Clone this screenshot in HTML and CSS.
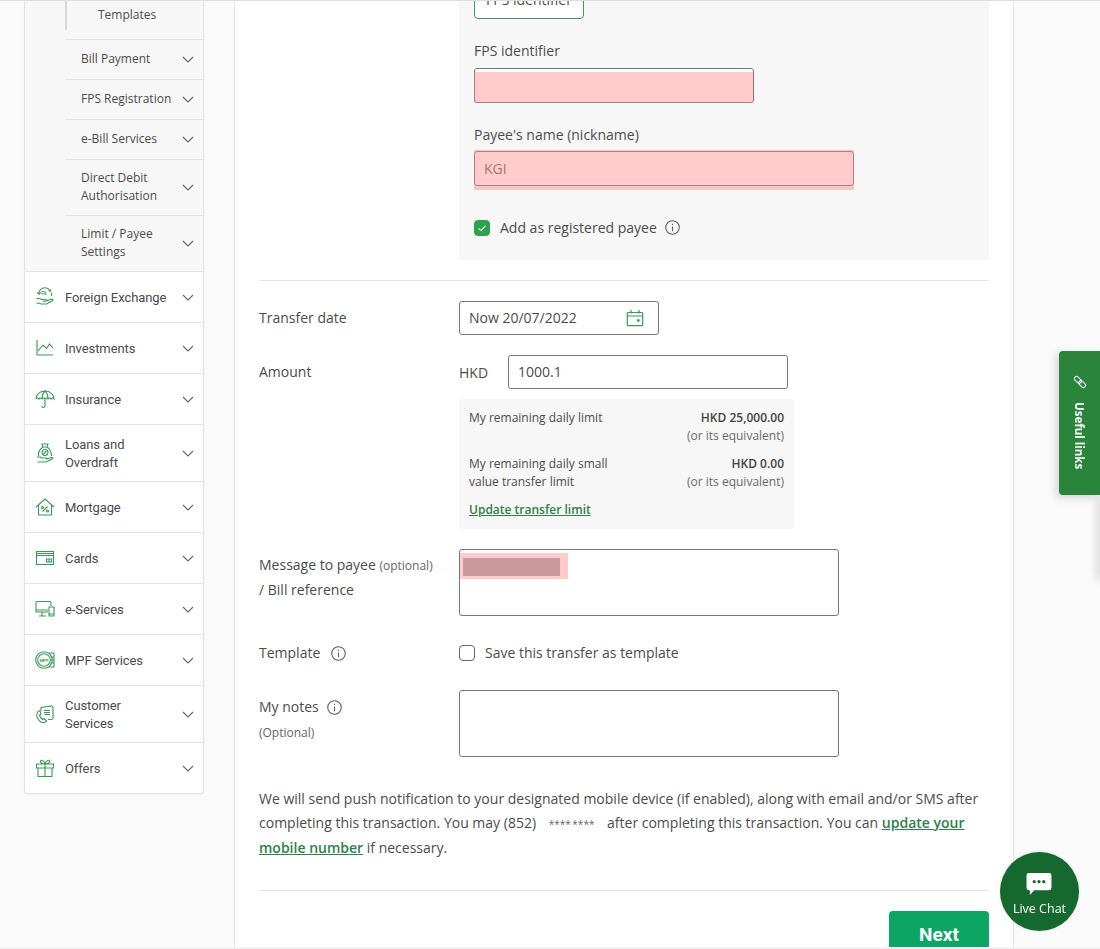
FILE: index.html
```html
<!DOCTYPE html>
<html lang="en">
<head>
<meta charset="utf-8">
<title>Transfer</title>
<link rel="stylesheet" href="styles.css">
</head>
<body>
<div class="page">
  <aside class="sidebar">
    <div class="submenu">
      <div class="sub-row sub-first"><span class="sub-current">Templates</span></div>
      <div class="sub-row"><span>Bill Payment</span><svg class="chev" viewBox="0 0 12 7"><path d="M1 1l5 5 5-5"/></svg></div>
      <div class="sub-row"><span>FPS Registration</span><svg class="chev" viewBox="0 0 12 7"><path d="M1 1l5 5 5-5"/></svg></div>
      <div class="sub-row"><span>e-Bill Services</span><svg class="chev" viewBox="0 0 12 7"><path d="M1 1l5 5 5-5"/></svg></div>
      <div class="sub-row sub-tall"><span>Direct Debit<br>Authorisation</span><svg class="chev" viewBox="0 0 12 7"><path d="M1 1l5 5 5-5"/></svg></div>
      <div class="sub-row sub-tall"><span>Limit / Payee<br>Settings</span><svg class="chev" viewBox="0 0 12 7"><path d="M1 1l5 5 5-5"/></svg></div>
    </div>
    <div class="menu-row">
      <svg class="micon" viewBox="0 0 20 20"><path d="M4 7a6 6 0 0 1 11-3.500M16.500 5.500a6 6 0 0 1-.3 3.500M13.500 3.500l1.700.8.800-1.800M2.300 5.500L4 7.200 5.800 5.700"/><path d="M1.500 11.500h3l2 1h4c1.200 0 1.200 1.800 0 1.800H7.500M11 14l5.500-1.800c1.500-.3 2 1 .9 1.600L11.500 17H6l-1.500-.8h-3"/><text class="fx" x="6.200" y="7.800">FX</text></svg>
      <span>Foreign Exchange</span><svg class="chev" viewBox="0 0 12 7"><path d="M1 1l5 5 5-5"/></svg>
    </div>
    <div class="menu-row">
      <svg class="micon" viewBox="0 0 20 20"><path d="M2 2v15h16M3 13l5-6 3.500 3.500L14.500 6l3.500 4"/></svg>
      <span>Investments</span><svg class="chev" viewBox="0 0 12 7"><path d="M1 1l5 5 5-5"/></svg>
    </div>
    <div class="menu-row">
      <svg class="micon" viewBox="0 0 20 20"><path d="M1 10a9 8 0 0 1 18 0c-1-1.300-2.500-1.300-3 0-.8-1.300-2.500-1.300-3 0-.8-1.300-2.500-1.300-3 0-.8-1.300-2.500-1.300-3 0-.8-1.300-2.500-1.300-3 0-.8-1.300-2.500-1.300-3 0zM10 2V1M7 10c0-4 1.500-6.500 3-8 1.500 1.500 3 4 3 8M10 10v7c0 2-3 2-3 0"/></svg>
      <span>Insurance</span><svg class="chev" viewBox="0 0 12 7"><path d="M1 1l5 5 5-5"/></svg>
    </div>
    <div class="menu-row menu-tall">
      <svg class="micon" viewBox="0 0 20 20"><path d="M7 1h6l-1 3H8zM8 4c-3 2-5 5-4.500 9M12 4c3 2 4.500 5 4.500 9"/><circle cx="10" cy="9.500" r="3"/><path d="M8.500 11l3-3M2 14h3l2 1h4c1 0 1 1.300 0 1.300M11 16l5.500-1.500c1.300-.3 1.800.8.800 1.300L11 19H2.500"/></svg>
      <span>Loans and<br>Overdraft</span><svg class="chev" viewBox="0 0 12 7"><path d="M1 1l5 5 5-5"/></svg>
    </div>
    <div class="menu-row">
      <svg class="micon" viewBox="0 0 20 20"><path d="M1 10l9-8 9 8M3.500 8.500V18h13V8.500M7.500 14.500l5-5"/><circle cx="7.500" cy="10.500" r="1"/><circle cx="12.500" cy="14" r="1"/></svg>
      <span>Mortgage</span><svg class="chev" viewBox="0 0 12 7"><path d="M1 1l5 5 5-5"/></svg>
    </div>
    <div class="menu-row">
      <svg class="micon" viewBox="0 0 20 20"><path d="M1.500 3.500h17v13h-17zM1.500 7.500h17M1.500 5.500h17"/><path d="M11.500 11h5v3h-5zM14 11v3"/></svg>
      <span>Cards</span><svg class="chev" viewBox="0 0 12 7"><path d="M1 1l5 5 5-5"/></svg>
    </div>
    <div class="menu-row">
      <svg class="micon" viewBox="0 0 20 20"><path d="M13 13H1V3.500A1 1 0 0 1 2 2.500h13a1 1 0 0 1 1 1V7M1 11h12M7 13v3.500M4 17h7M14 8h5v9h-5zM14 15h5"/></svg>
      <span>e-Services</span><svg class="chev" viewBox="0 0 12 7"><path d="M1 1l5 5 5-5"/></svg>
    </div>
    <div class="menu-row">
      <svg class="micon" viewBox="0 0 20 20"><circle cx="9" cy="10" r="8.300"/><circle cx="9" cy="10" r="6.300"/><path d="M14 3h5v14h-5M15.500 7h3M15.500 10h3M15.500 13h3"/><text class="mpf" x="9" y="11.600">MPF</text></svg>
      <span>MPF Services</span><svg class="chev" viewBox="0 0 12 7"><path d="M1 1l5 5 5-5"/></svg>
    </div>
    <div class="menu-row menu-tall">
      <svg class="micon" viewBox="0 0 20 20"><path d="M6 6.500V3.500L16 2c1 0 2 1 2 2v10c0 1-1 1.500-2 1.500h-3M9 6.500h6M9 8.500h6M9.500 10.500h5.500"/><path d="M5 6.500c-3 1-4 4-2.500 7.500 1.500 3 4.500 5 7 4.500l2-1.500-2.500-2.500-1.500 1c-1.500-1-2.500-2.500-3-4l1.500-1.500z"/></svg>
      <span>Customer<br>Services</span><svg class="chev" viewBox="0 0 12 7"><path d="M1 1l5 5 5-5"/></svg>
    </div>
    <div class="menu-row menu-last">
      <svg class="micon" viewBox="0 0 20 20"><path d="M1.500 6h17v4h-17zM3 10v8.500h14V10M10 6v12.500M10 6C7 6 5 4.500 5.500 3S9 2 10 6c1-4 4-4.500 4.500-3S13 6 10 6z"/></svg>
      <span>Offers</span><svg class="chev" viewBox="0 0 12 7"><path d="M1 1l5 5 5-5"/></svg>
    </div>
  </aside>

  <main class="content">
    <section class="payee-panel">
      <div class="tag">FPS identifier</div>
      <label class="field-label">FPS identifier</label>
      <div class="redact-wrap">
        <div class="input input-fps"></div>
        <div class="redact redact-fps"></div>
      </div>
      <label class="field-label label-name">Payee's name (nickname)</label>
      <div class="redact-wrap">
        <div class="input input-name">KGI</div>
        <div class="redact redact-name"></div>
      </div>
      <div class="check-row">
        <span class="check check-on"><svg viewBox="0 0 16 16"><path d="M4 8.300l2.800 2.700L12 5.500"/></svg></span>
        <span>Add as registered payee</span>
        <svg class="info info-payee" viewBox="0 0 14 14"><circle cx="7" cy="7" r="6.300"/><path d="M7 6v4.500M7 3.500v1.200"/></svg>
      </div>
    </section>
    <hr class="rule rule-first">
    <div class="row row-date">
      <div class="row-label">Transfer date</div>
      <div class="input input-date"><span>Now 20/07/2022</span>
        <svg class="cal" viewBox="0 0 18 18"><path d="M2 3.500h14a.7.7 0 0 1 .7.7V16a.7.7 0 0 1-.7.7H2a.7.7 0 0 1-.7-.7V4.200a.7.7 0 0 1 .7-.7zM1.300 7h15.400M5 1v3.500M13 1v3.500"/><circle class="cal-dot" cx="12.300" cy="11.500" r="1.400"/></svg>
      </div>
    </div>
    <div class="row row-amount">
      <div class="row-label label-amount">Amount</div>
      <div class="amount-col">
        <div class="amount-line"><span class="ccy">HKD</span><div class="input input-amount">1000.1</div></div>
        <div class="limits">
          <div class="limit-row limit-one"><span>My remaining daily limit</span><span class="limit-val"><b>HKD 25,000.00</b><br><i>(or its equivalent)</i></span></div>
          <div class="limit-row limit-two"><span>My remaining daily small<br>value transfer limit</span><span class="limit-val"><b>HKD 0.00</b><br><i>(or its equivalent)</i></span></div>
          <a class="limit-link" href="#">Update transfer limit</a>
        </div>
      </div>
    </div>
    <div class="row row-message">
      <div class="row-label label-message">Message to payee <small>(optional)</small><br>/ Bill reference</div>
      <div class="redact-wrap">
        <div class="textarea"></div>
        <div class="redact redact-message"><div class="redact-inner"></div></div>
      </div>
    </div>
    <div class="row row-template">
      <div class="row-label label-info">Template <svg class="info info-template" viewBox="0 0 14 14"><circle cx="7" cy="7" r="6.300"/><path d="M7 6v4.500M7 3.500v1.200"/></svg></div>
      <div class="check-row check-plain"><span class="check"></span><span class="check-text">Save this transfer as template</span></div>
    </div>
    <div class="row row-notes">
      <div class="row-label label-notes"><div class="label-info">My notes <svg class="info info-notes" viewBox="0 0 14 14"><circle cx="7" cy="7" r="6.300"/><path d="M7 6v4.500M7 3.500v1.200"/></svg></div><small class="optional">(Optional)</small></div>
      <div class="textarea"></div>
    </div>
    <p class="notice">We will send push notification to your designated mobile device (if enabled), along with email and/or SMS after completing this transaction. You may (852) <span class="masked">****&thinsp;****</span> after completing this transaction. You can <a href="#">update your mobile number</a> if necessary.</p>
    <hr class="rule rule-last">
    <div class="actions"><button class="next" type="button">Next</button></div>
  </main>
</div>

<div class="side-shadow"></div>
<a class="useful" href="#">
  <svg class="useful-icon" viewBox="0 0 16 16"><g transform="rotate(45 8 8)"><rect x="1" y="5.800" width="8" height="4.400" rx="2.200"/><rect x="7" y="5.800" width="8" height="4.400" rx="2.200"/></g></svg>
  <span class="useful-text">Useful links</span>
</a>
<a class="chat" href="#">
  <svg class="chat-icon" viewBox="0 0 26 24"><path class="bubble" d="M2.500 0h21A2.500 2.500 0 0 1 26 2.500v13a2.500 2.500 0 0 1-2.500 2.500H8l-4.500 5v-5h-1A2.500 2.500 0 0 1 0 15.500v-13A2.500 2.500 0 0 1 2.500 0z"/><circle class="dot" cx="8" cy="9" r="1.700"/><circle class="dot" cx="13" cy="9" r="1.700"/><circle class="dot" cx="18" cy="9" r="1.700"/></svg>
  <span>Live Chat</span>
</a>
</body>
</html>
```
FILE: styles.css
```css
* { box-sizing: border-box; }
html, body { margin: 0; height: 949px; overflow: hidden; }
body {
  background: #fafafa;
  border-top: 1px solid #dedede;
  border-bottom: 2px solid #f2f2f2;
  font-family: "Open Sans", "Liberation Sans", sans-serif;
  font-size: 14px;
  color: #4c4c4c;
  position: relative;
}
.page { display: flex; align-items: flex-start; height: 946px; overflow: hidden; padding-left: 24px; }

/* sidebar */
.sidebar {
  width: 180px;
  margin-right: 30px;
  background: #fff;
  border: 1px solid #e3e3e3;
  border-top: 0;
  border-radius: 0 0 4px 4px;
  box-shadow: 0 1px 2px rgba(0,0,0,.04);
  font-family: Roboto, "Liberation Sans", sans-serif;
  font-size: 13px;
  letter-spacing: -.08px;
  line-height: 18px;
  color: #4a4a52;
}
.submenu {
  background: #f7f7f7;
  padding-left: 40px;
  font-family: "Open Sans", "Liberation Sans", sans-serif;
  font-size: 12px;
  letter-spacing: 0;
  color: #4c4c4c;
}
.sub-row {
  display: flex;
  align-items: center;
  justify-content: space-between;
  height: 40px;
  padding: 0 9px 0 16px;
  border-bottom: 1px solid #e3e3e3;
}
.sub-row > span { margin-bottom: 2px; }
.sub-row:last-child { margin-left: -40px; padding-left: 56px; }
.sub-first { height: 39px; padding: 0; align-items: flex-start; }
.sub-row > .sub-current {
  display: block;
  height: 29px;
  margin: 0;
  padding: 5px 0 0 31px;
  border-left: 2px solid #d8d8d8;
}
.sub-tall { height: 56px; }
.chev { width: 12px; height: 7px; flex: none; fill: none; stroke: #666; stroke-width: 1.1; }
.menu-row {
  display: flex;
  align-items: center;
  height: 51px;
  padding: 0 9px 0 10px;
  border-bottom: 1px solid #e3e3e3;
}
.menu-tall { height: 57px; }
.menu-last { border-bottom: 0; height: 50px; }
.menu-row span { flex: 1; margin-top: 2px; }
.micon { width: 20px; height: 20px; flex: none; margin-right: 10px; fill: none; stroke: #3a9a58; stroke-width: 1.1; }
.fx { font: 700 4.500px Roboto, sans-serif; fill: #3a9a58; stroke: none; }
.mpf { font: 700 4.300px Roboto, sans-serif; fill: #3a9a58; stroke: none; text-anchor: middle; }

/* main */
.content {
  width: 780px;
  height: 946px;
  background: #fff;
  border-left: 1px solid #e3e3e3;
  border-right: 1px solid #e3e3e3;
  padding: 0 24px;
  overflow: hidden;
}
.payee-panel {
  margin-left: 200px;
  height: 259px;
  background: #f7f7f7;
  padding: 0 15px;
  overflow: hidden;
}
.tag {
  width: 110px;
  height: 32px;
  margin-top: -14px;
  padding-top: 2px;
  border: 1px solid #3a9a58;
  border-radius: 4px;
  background: #fff;
  text-align: center;
  line-height: 20px;
}
.field-label { display: block; margin-top: 22px; line-height: 20px; color: #4c4c4c; }
.input {
  height: 35px;
  display: flex;
  align-items: center;
  padding: 0 9px 2px;
  background: #fff;
  border: 1px solid #777;
  border-radius: 3px;
}
.redact-wrap { position: relative; width: fit-content; }
.input-fps { width: 280px; margin-top: 7px; }
.input-name { width: 380px; margin-top: 6px; padding-bottom: 0; color: #666; }
.redact { position: absolute; background: rgba(255, 130, 130, .42); }
.redact-fps { left: 0; top: 4px; width: 279px; height: 31px; }
.redact-name { left: 0; top: -1px; width: 380px; height: 40px; }
.redact-message { left: 1px; top: 4px; width: 108px; height: 26px; padding: 5px 8px 3px 3px; }
.redact-inner { height: 18px; background: #cc9a9c; }
.check-row { display: flex; align-items: center; gap: 10px; }
.payee-panel .check-row { margin-top: 32px; }
.check {
  width: 16px;
  height: 16px;
  flex: none;
  background: #fff;
  border: 1px solid #666;
  border-radius: 4px;
}
.check-on { background: #2ba24c; border-color: #2ba24c; display: flex; }
.check-on svg { fill: none; stroke: #fff; stroke-width: 1.200; width: 14px; height: 14px; }
.check-text { margin-bottom: 2px; }
.info { width: 15px; height: 15px; fill: none; stroke: #5c5c5c; stroke-width: 1; flex: none; }
.info-payee { margin-left: -2px; }
.rule { border: 0; border-top: 1px solid #e3e3e3; margin: 0; }
.rule-first { margin-top: 20px; }
.row { display: flex; }
.row-label { width: 200px; flex: none; line-height: 24px; }
.row-date { margin-top: 20px; }
.row-date .row-label { padding-top: 5px; }
.input-date { width: 200px; height: 34px; justify-content: space-between; padding: 0 14px 2px 9px; }
.cal { width: 18px; height: 18px; margin-top: 2px; fill: none; stroke: #3a9a58; stroke-width: 1.200; }
.cal-dot { fill: #3a9a58; stroke: none; }
.row-amount { margin-top: 20px; }
.label-amount { padding-top: 5px; }
.amount-line { display: flex; align-items: center; }
.ccy { width: 49px; }
.input-amount { width: 280px; height: 34px; }
.limits {
  width: 335px;
  height: 130px;
  margin-top: 10px;
  padding: 10px;
  background: #f7f7f7;
  border-radius: 3px;
  font-size: 12px;
  line-height: 18px;
}
.limit-row { display: flex; justify-content: space-between; }
.limit-two { margin-top: 10px; }
.limit-val { text-align: right; }
.limit-val b { font-weight: 600; color: #444; }
.limit-val i { font-style: normal; color: #6a6a6a; }
.limit-link { display: block; width: fit-content; margin-top: 10px; color: #2f7f48; font-weight: 600; }
.row-message { margin-top: 20px; }
.label-message { padding-top: 4px; }
.label-message small { font-size: 12px; color: #666; }
.textarea { width: 380px; height: 67px; background: #fff; border: 1px solid #777; border-radius: 3px; }
.row-template { margin-top: 25px; align-items: center; height: 24px; }
.label-info { display: flex; align-items: center; }
.info-template { margin-left: 11px; }
.info-notes { margin-left: 8px; }
.row-notes { margin-top: 25px; }
.label-notes { padding-top: 5px; }
.optional { display: block; font-size: 12px; color: #666; margin-top: 2px; }
.notice { margin: 30px 0 0; line-height: 24px; color: #4c4c4c; }
.masked { font-size: 10px; margin: 0 9px 0 9px; color: #666; }
.notice a, .limit-link { text-decoration: underline; }
.notice a { color: #2f7f48; font-weight: 600; }
.rule-last { margin-top: 30px; }
.actions { display: flex; justify-content: flex-end; margin-top: 20px; }
.next {
  width: 100px;
  height: 48px;
  flex: none;
  padding: 0 0 2px;
  border: 0;
  border-radius: 4px;
  background: #0ca564;
  color: #fff;
  font: 700 19px Roboto, "Liberation Sans", sans-serif;
}

/* floating */
.useful {
  position: fixed;
  left: 1059px;
  top: 351px;
  width: 41px;
  height: 144px;
  background: #2a843c;
  border-radius: 4px 0 0 4px;
  box-shadow: -3px 3px 8px rgba(0,0,0,.15);
  display: flex;
  flex-direction: column;
  align-items: center;
  padding-top: 23px;
  color: #fff;
  text-decoration: none;
}
.useful-icon { width: 16px; height: 16px; fill: none; stroke: #fff; stroke-width: 1; }
.useful-text {
  margin-top: 12px;
  margin-left: -2px;
  writing-mode: vertical-rl;
  font: 700 11.500px/14px "Open Sans", sans-serif;
}
.side-shadow {
  position: fixed;
  right: -6px;
  top: 495px;
  width: 6px;
  height: 85px;
  box-shadow: -3px 0 8px rgba(0,0,0,.16);
}
.chat {
  position: fixed;
  left: 1000px;
  top: 852px;
  width: 79px;
  height: 79px;
  border-radius: 50%;
  background: #15692e;
  box-shadow: 0 0 3px rgba(0,0,0,.15);
  display: flex;
  flex-direction: column;
  align-items: center;
  padding-top: 21px;
  color: #fff;
  text-decoration: none;
  font-size: 12.500px;
  line-height: 16px;
}
.chat-icon { width: 26px; height: 23px; margin: 0 1px 5px 0; }
.bubble { fill: #fff; }
.dot { fill: #15692e; }
```
